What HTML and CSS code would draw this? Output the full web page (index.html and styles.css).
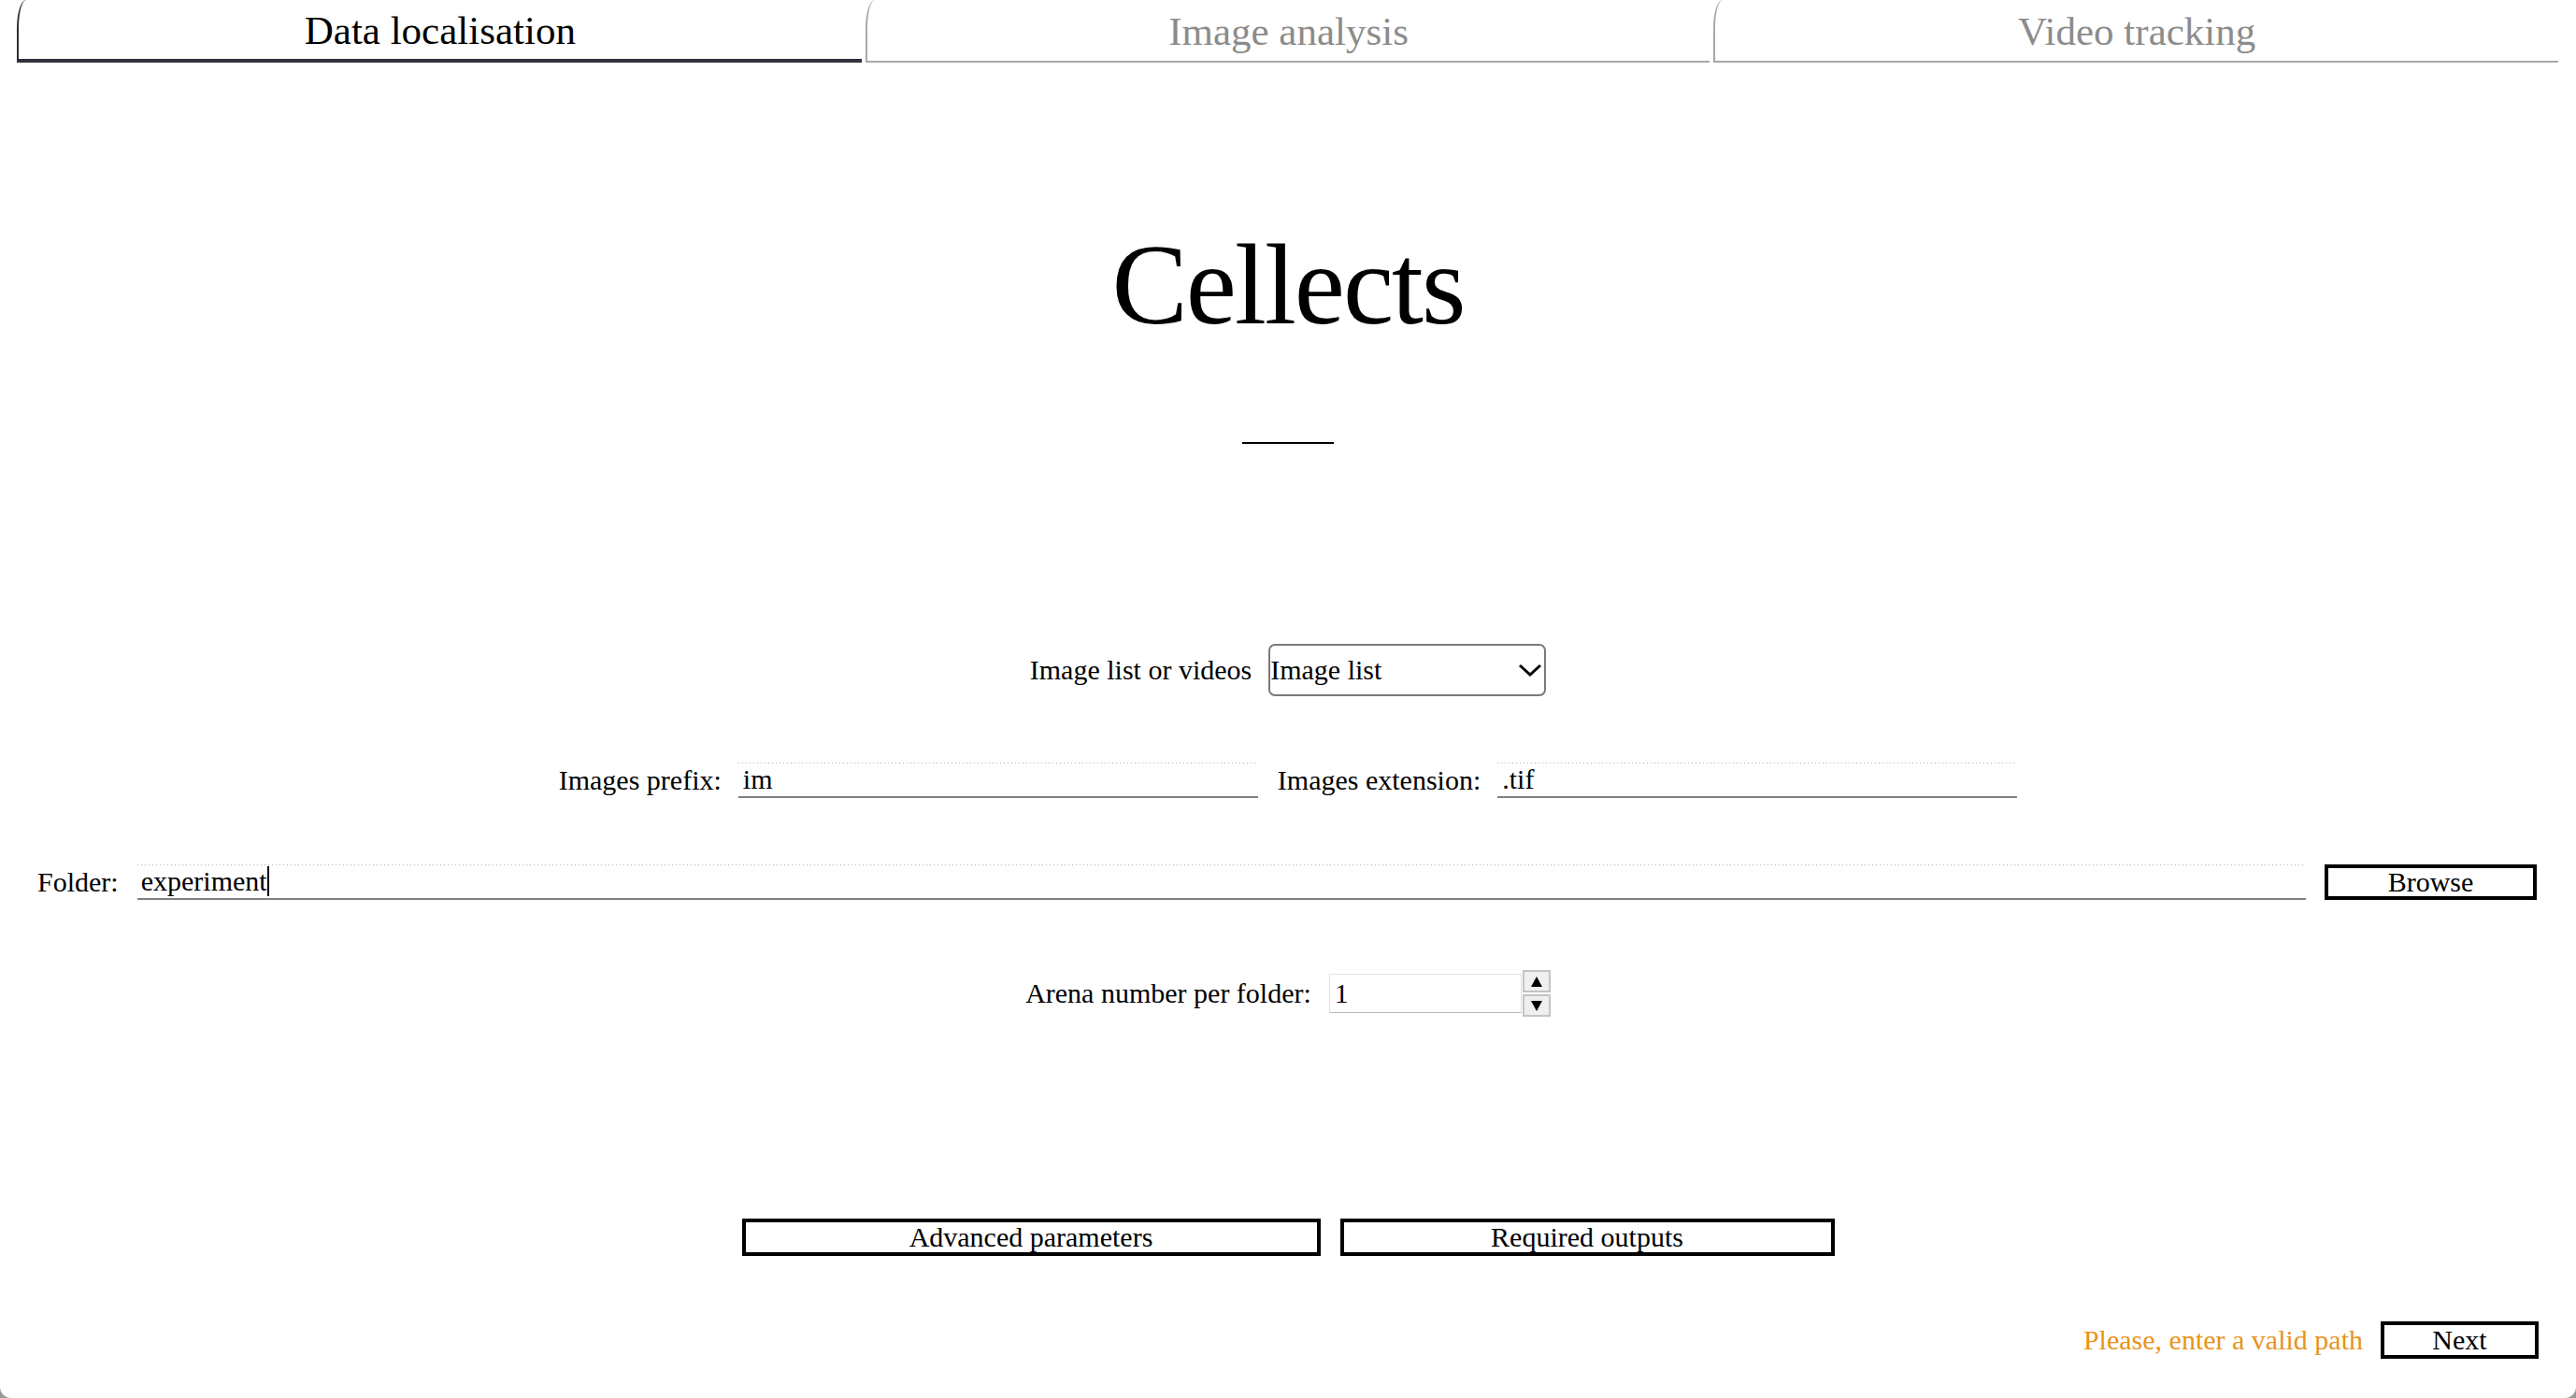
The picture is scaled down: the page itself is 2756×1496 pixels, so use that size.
FILE: index.html
```html
<!DOCTYPE html>
<html lang="en">
<head>
    <meta charset="UTF-8">
    <title>Cellects</title>
    <link rel="stylesheet" href="styles.css">
</head>
<body>
    <div class="window">
        <div class="tabs">
            <div class="tab active">Data localisation</div>
            <div class="tab">Image analysis</div>
            <div class="tab">Video tracking</div>
        </div>

        <div class="page">
            <h1 class="title">Cellects</h1>
            <div class="title-rule"></div>

            <div class="row row-mode">
                <span class="label">Image list or videos</span>
                <div class="select">
                    <span>Image list</span>
                    <svg class="chevron" width="26" height="16" viewBox="0 0 26 16">
                        <path d="M2 3 L13 13 L24 3" fill="none" stroke="#000" stroke-width="3"/>
                    </svg>
                </div>
            </div>

            <div class="row row-names">
                <span class="label">Images prefix:</span>
                <div class="line-edit short">im</div>
                <span class="label">Images extension:</span>
                <div class="line-edit short">.tif</div>
            </div>

            <div class="row row-folder">
                <span class="label">Folder:</span>
                <div class="line-edit wide">experiment<span class="caret"></span></div>
                <button class="btn browse-btn">Browse</button>
            </div>

            <div class="row row-arena">
                <span class="label">Arena number per folder:</span>
                <div class="spinbox">
                    <div class="spin-value">1</div>
                    <div class="spin-arrows">
                        <span class="spin-arrow">
                            <svg width="12" height="11" viewBox="0 0 12 11"><polygon points="6,0 12,11 0,11" fill="#000"/></svg>
                        </span>
                        <span class="spin-arrow">
                            <svg width="12" height="11" viewBox="0 0 12 11"><polygon points="0,0 12,0 6,11" fill="#000"/></svg>
                        </span>
                    </div>
                </div>
            </div>

            <div class="row row-more">
                <button class="btn advanced-btn">Advanced parameters</button>
                <button class="btn outputs-btn">Required outputs</button>
            </div>

            <div class="row row-next">
                <span class="message">Please, enter a valid path</span>
                <button class="btn next-btn">Next</button>
            </div>
        </div>
    </div>
</body>
</html>
```

FILE: styles.css
```css
* {
    box-sizing: border-box;
    margin: 0;
    padding: 0;
}
html {
    background-color: #9a9a9a;
}
body {
    font-family: 'Liberation Serif', 'Times New Roman', serif;
    font-size: 30px;
    color: #000;
}
.window {
    height: 100vh;
    overflow: hidden;
    background-color: #fff;
    border-radius: 0 0 12px 12px;
}

/* tab bar */
.tabs {
    display: flex;
    gap: 4px;
    padding: 0 19px 0 18px;
}
.tab {
    flex: 1;
    height: 67px;
    display: flex;
    justify-content: center;
    align-items: center;
    padding-top: 2px;
    font-size: 43px;
    color: #8c8c8c;
    border-left: 2px solid #a8a8a8;
    border-bottom: 2px solid #a8a8a8;
    border-top-left-radius: 10px 30px;
}
.tab.active {
    color: #000;
    border-left-color: #30303c;
    border-bottom: 4px solid #30303c;
}

/* title */
.title {
    margin-top: 177px;
    font-size: 122px;
    font-weight: normal;
    line-height: 1;
    letter-spacing: -2px;
    text-align: center;
}
.title-rule {
    width: 98px;
    height: 2px;
    margin: 107px auto 0;
    background-color: #000;
}

/* form rows */
.row {
    display: flex;
    justify-content: center;
    align-items: center;
    gap: 20px;
}
.label {
    white-space: nowrap;
}
.row-mode {
    margin-top: 214px;
    gap: 18px;
}
.select {
    width: 297px;
    height: 56px;
    display: flex;
    align-items: center;
    justify-content: space-between;
    padding-right: 2px;
    border: 2px solid #7a7a7a;
    border-radius: 7px;
}
.line-edit {
    height: 38px;
    display: flex;
    align-items: center;
    padding-left: 5px;
    border-bottom: 2px solid #808080;
    background-image: linear-gradient(to right, #b4b4b4 1px, transparent 1px);
    background-size: 4px 1px;
    background-repeat: repeat-x;
    background-position: top left;
}
.line-edit.short {
    width: 556px;
}
.line-edit.wide {
    flex: 1;
    padding-left: 4px;
}
.caret {
    display: inline-block;
    width: 2px;
    height: 32px;
    background-color: #000;
}
.row-names {
    margin-top: 71px;
    gap: 18px;
}
.row-names .line-edit.short + .label {
    margin-left: 3px;
}
.row-folder {
    margin-top: 71px;
    padding: 0 42px 0 40px;
    justify-content: stretch;
}
.btn {
    font-family: inherit;
    font-size: 30px;
    height: 40px;
    line-height: 1;
    background-color: #fff;
    color: #000;
    border: 4px solid #000;
    cursor: pointer;
}
.browse-btn {
    width: 227px;
    height: 38px;
}
.row-arena {
    margin-top: 75px;
    gap: 19px;
}
.spinbox {
    display: flex;
    align-items: center;
    gap: 1px;
}
.spin-value {
    width: 206px;
    height: 42px;
    display: flex;
    align-items: center;
    padding-left: 5px;
    border: 1px solid #e0e0e0;
    border-bottom-color: #bdbdbd;
}
.spin-arrows {
    display: flex;
    flex-direction: column;
    gap: 2px;
}
.spin-arrow {
    width: 30px;
    height: 24px;
    display: flex;
    justify-content: center;
    align-items: center;
    background-color: #efefef;
    border: 2px solid #c4c4c4;
}
.row-more {
    margin-top: 216px;
    gap: 21px;
}
.advanced-btn {
    width: 619px;
}
.outputs-btn {
    width: 529px;
}
.row-next {
    margin-top: 70px;
    justify-content: flex-end;
    padding-right: 40px;
    gap: 19px;
}
.message {
    color: #e8941a;
}
.next-btn {
    width: 169px;
}
```
